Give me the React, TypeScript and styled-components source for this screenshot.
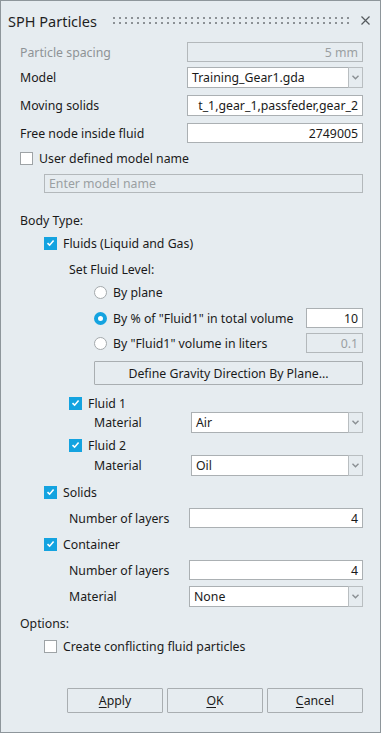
import React from 'react';
import styled, { createGlobalStyle } from 'styled-components';

const GlobalStyle = createGlobalStyle`
  html, body {
    margin: 0;
    padding: 0;
    background: #e6ecf0;
  }
  body {
    font-family: "Noto Sans", "Liberation Sans", sans-serif;
    color: #1a1a1a;
  }
`;

const Dialog = styled.div`
  width: 381px;
  height: 733px;
  box-sizing: border-box;
  border: 1px solid #8e969b;
  background: #e6ecf0;
  display: flex;
  flex-direction: column;
`;

const TitleBar = styled.div`
  height: 39px;
  display: flex;
  align-items: center;
  padding: 0 10px 0 7px;
  flex-shrink: 0;
`;

const Title = styled.div`
  font-size: 14.5px;
  color: #1f1f1f;
  margin-right: 16px;
  white-space: nowrap;
`;

const Grip = styled.svg`
  flex: 1;
  height: 7px;
  margin-right: 10px;
`;

const CloseButton = styled.svg`
  width: 9px;
  height: 9px;
  flex-shrink: 0;
`;

const Body = styled.div`
  display: flex;
  flex-direction: column;
  padding: 0 17px 0 19px;
  font-size: 12.3px;
`;

const Row = styled.div<{ $mt: number; $h: number; $indent?: number }>`
  display: flex;
  align-items: center;
  margin-top: ${(p) => p.$mt}px;
  height: ${(p) => p.$h}px;
  padding-left: ${(p) => p.$indent || 0}px;
`;

const Label = styled.span<{ $disabled?: boolean }>`
  color: ${(p) => (p.$disabled ? '#8e9396' : '#1a1a1a')};
  white-space: nowrap;
`;

const Field = styled.div<{ $w?: number; $disabled?: boolean; $right?: boolean }>`
  box-sizing: border-box;
  margin-left: auto;
  width: ${(p) => (p.$w ? `${p.$w}px` : 'auto')};
  flex: ${(p) => (p.$w ? '0 0 auto' : '1')};
  height: 100%;
  display: flex;
  align-items: center;
  justify-content: ${(p) => (p.$right ? 'flex-end' : 'flex-start')};
  padding: 0 4px;
  background: ${(p) => (p.$disabled ? '#e6ecf0' : '#fff')};
  border: 1px solid ${(p) => (p.$disabled ? '#b3b8bb' : '#abb0b3')};
  color: ${(p) => (p.$disabled ? '#9a9fa2' : '#1a1a1a')};
  white-space: nowrap;
  overflow: hidden;
`;

const Combo = styled.div<{ $w: number }>`
  margin-left: auto;
  width: ${(p) => p.$w}px;
  height: 100%;
  display: flex;
`;

const ComboValue = styled.div`
  flex: 1;
  box-sizing: border-box;
  display: flex;
  align-items: center;
  padding: 0 4px;
  background: #fff;
  border: 1px solid #abb0b3;
  border-right: none;
`;

const ComboButton = styled.div`
  width: 15px;
  box-sizing: border-box;
  border: 1px solid #b9bec1;
  background: #e6ecf0;
  display: flex;
  align-items: center;
  justify-content: center;
`;

const Box = styled.span<{ $checked?: boolean }>`
  box-sizing: border-box;
  width: 13px;
  height: 13px;
  flex-shrink: 0;
  margin-right: 6px;
  display: flex;
  align-items: center;
  justify-content: center;
  background: ${(p) => (p.$checked ? '#14a3e0' : '#fff')};
  border: 1px solid ${(p) => (p.$checked ? '#14a3e0' : '#9ea3a6')};
`;

const Radio = styled.span<{ $checked?: boolean }>`
  box-sizing: border-box;
  width: 13px;
  height: 13px;
  border-radius: 50%;
  flex-shrink: 0;
  margin-right: 6px;
  background: #fff;
  border: ${(p) => (p.$checked ? '4px solid #14a3e0' : '1px solid #a4a9ac')};
`;

const Button = styled.button<{ $w?: number }>`
  box-sizing: border-box;
  width: ${(p) => (p.$w ? `${p.$w}px` : '100%')};
  height: 100%;
  font: inherit;
  font-size: 12.3px;
  color: #1a1a1a;
  background: #e6ecf0;
  border: 1px solid #a9aeb1;
  border-radius: 1px;
  padding: 0;
  cursor: pointer;

  u {
    text-decoration: underline;
    text-underline-offset: 2px;
  }
`;

const Footer = styled.div`
  display: flex;
  justify-content: flex-end;
  gap: 4px;
  margin-top: 34px;
  height: 25px;
`;

const Arrow = () => (
  <svg width="7" height="5" viewBox="0 0 7 5">
    <path d="M0.5 0.8 L3.5 3.8 L6.5 0.8" fill="none" stroke="#8a8f93" strokeWidth="1.4" />
  </svg>
);

const Check = () => (
  <svg width="9" height="8" viewBox="0 0 9 8">
    <path d="M1.5 4.2 L3.6 6.2 L7.6 1.6" fill="none" stroke="#fff" strokeWidth="1.6" />
  </svg>
);

function Checkbox({ checked, label }: { checked?: boolean; label: string }) {
  return (
    <>
      <Box $checked={checked}>{checked && <Check />}</Box>
      <Label>{label}</Label>
    </>
  );
}

function Select({ w, value }: { w: number; value: string }) {
  return (
    <Combo $w={w}>
      <ComboValue>{value}</ComboValue>
      <ComboButton>
        <Arrow />
      </ComboButton>
    </Combo>
  );
}

export default function App() {
  return (
    <>
      <GlobalStyle />
      <Dialog>
        <TitleBar>
          <Title>SPH Particles</Title>
          <Grip preserveAspectRatio="none">
            <defs>
              <pattern id="grip" width="6" height="5" patternUnits="userSpaceOnUse">
                <rect x="0" y="0" width="2" height="2" fill="#8c9195" />
              </pattern>
            </defs>
            <rect x="0" y="0" width="100%" height="7" fill="url(#grip)" />
          </Grip>
          <CloseButton viewBox="0 0 9 9">
            <path d="M0.5 0.5 L8.5 8.5 M8.5 0.5 L0.5 8.5" stroke="#555a5e" strokeWidth="1.2" />
          </CloseButton>
        </TitleBar>

        <Body>
          <Row $mt={2} $h={20}>
            <Label $disabled>Particle spacing</Label>
            <Field $w={176} $disabled $right>5 mm</Field>
          </Row>
          <Row $mt={5} $h={21}>
            <Label>Model</Label>
            <Select w={176} value="Training_Gear1.gda" />
          </Row>
          <Row $mt={7} $h={21}>
            <Label>Moving solids</Label>
            <Field $w={176} $right>t_1,gear_1,passfeder,gear_2</Field>
          </Row>
          <Row $mt={7} $h={20}>
            <Label>Free node inside fluid</Label>
            <Field $w={176} $right>2749005</Field>
          </Row>
          <Row $mt={7} $h={16}>
            <Checkbox label="User defined model name" />
          </Row>
          <Row $mt={8} $h={19} $indent={24}>
            <Field $disabled>Enter model name</Field>
          </Row>

          <Row $mt={19} $h={16}>
            <Label>Body Type:</Label>
          </Row>
          <Row $mt={7} $h={16} $indent={24}>
            <Checkbox checked label="Fluids (Liquid and Gas)" />
          </Row>
          <Row $mt={10} $h={16} $indent={49}>
            <Label>Set Fluid Level:</Label>
          </Row>
          <Row $mt={7} $h={16} $indent={74}>
            <Radio />
            <Label>By plane</Label>
          </Row>
          <Row $mt={8} $h={20} $indent={74}>
            <Radio $checked />
            <Label>By % of "Fluid1" in total volume</Label>
            <Field $w={57} $right>10</Field>
          </Row>
          <Row $mt={5} $h={20} $indent={74}>
            <Radio />
            <Label>By "Fluid1" volume in liters</Label>
            <Field $w={57} $disabled $right>0.1</Field>
          </Row>
          <Row $mt={8} $h={24} $indent={74}>
            <Button>Define Gravity Direction By Plane...</Button>
          </Row>
          <Row $mt={10} $h={16} $indent={49}>
            <Checkbox checked label="Fluid 1" />
          </Row>
          <Row $mt={1} $h={21} $indent={74}>
            <Label>Material</Label>
            <Select w={172} value="Air" />
          </Row>
          <Row $mt={4} $h={16} $indent={49}>
            <Checkbox checked label="Fluid 2" />
          </Row>
          <Row $mt={2} $h={21} $indent={74}>
            <Label>Material</Label>
            <Select w={172} value="Oil" />
          </Row>
          <Row $mt={8} $h={16} $indent={24}>
            <Checkbox checked label="Solids" />
          </Row>
          <Row $mt={8} $h={20} $indent={49}>
            <Label>Number of layers</Label>
            <Field $w={174} $right>4</Field>
          </Row>
          <Row $mt={8} $h={16} $indent={24}>
            <Checkbox checked label="Container" />
          </Row>
          <Row $mt={8} $h={20} $indent={49}>
            <Label>Number of layers</Label>
            <Field $w={174} $right>4</Field>
          </Row>
          <Row $mt={6} $h={21} $indent={49}>
            <Label>Material</Label>
            <Select w={174} value="None" />
          </Row>

          <Row $mt={8} $h={16}>
            <Label>Options:</Label>
          </Row>
          <Row $mt={7} $h={16} $indent={24}>
            <Checkbox label="Create conflicting fluid particles" />
          </Row>

          <Footer>
            <Button $w={96}><u>A</u>pply</Button>
            <Button $w={96}><u>O</u>K</Button>
            <Button $w={96}><u>C</u>ancel</Button>
          </Footer>
        </Body>
      </Dialog>
    </>
  );
}
